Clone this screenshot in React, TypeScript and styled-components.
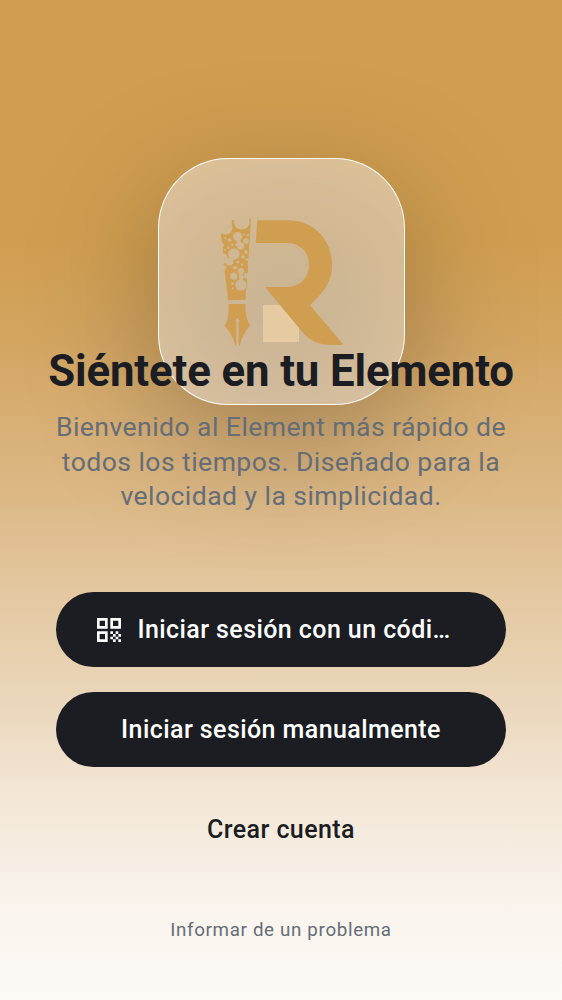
import React from "react";
import styled, { createGlobalStyle } from "styled-components";

const Global = createGlobalStyle`
  * { box-sizing: border-box; }
  body { margin: 0; font-family: Roboto, "Liberation Sans", sans-serif; }
`;

const Screen = styled.main`
  position: relative;
  isolation: isolate;
  overflow: hidden;
  height: 1000px;
  padding: 158px 56px 0;
  display: flex;
  flex-direction: column;
  align-items: center;
  background: linear-gradient(
    180deg,
    #d09e50 0px,
    #d09e50 240px,
    #d3a561 340px,
    #ddb987 500px,
    #e4c9a2 600px,
    #ebd6bb 700px,
    #f3e7d7 800px,
    #f9f3ec 900px,
    #fdfaf6 1000px
  );
`;

const LogoCard = styled.div`
  position: relative;
  flex: none;
  width: 247px;
  height: 247px;
  margin-bottom: -60px;
  border-radius: 70px;
  border: 1px solid rgba(255, 255, 255, 0.95);
  background: rgba(234, 220, 201, 0.6);

  &::before {
    content: "";
    position: absolute;
    z-index: -1;
    inset: 0;
    border-radius: 60px;
    transform: translateY(34px);
    background: rgba(0, 0, 0, 0.26);
    filter: blur(62px);
  }
`;

const Logo = styled.svg`
  position: absolute;
  left: 51px;
  top: 51px;
`;

const Title = styled.h1`
  position: relative;
  margin: 0;
  font-size: 43.75px;
  line-height: 53px;
  font-weight: 700;
  letter-spacing: -0.12px;
  white-space: nowrap;
  color: #1b1d22;
`;

const Message = styled.p`
  position: relative;
  width: 470px;
  margin: 12.3px 0 0;
  font-size: 26.56px;
  line-height: 34.5px;
  letter-spacing: 0.44px;
  text-align: center;
  color: #656d77;
`;

const Actions = styled.div`
  position: relative;
  display: flex;
  flex-direction: column;
  gap: 25px;
  width: 450px;
  margin-top: 78.4px;
`;

const Button = styled.button<{ $plain?: boolean; $withIcon?: boolean }>`
  display: flex;
  align-items: center;
  justify-content: ${(p) => (p.$withIcon ? "flex-start" : "center")};
  gap: 16.4px;
  height: 75px;
  padding: ${(p) => (p.$withIcon ? "0 41px" : "0")};
  border: 0;
  border-radius: 38px;
  font: 500 25px Roboto, "Liberation Sans", sans-serif;
  letter-spacing: 0.42px;
  background: ${(p) => (p.$plain ? "transparent" : "#1b1d22")};
  color: ${(p) => (p.$plain ? "#1b1d22" : "#fff")};
`;

const Report = styled.a`
  position: relative;
  margin-top: 51px;
  font-size: 18.75px;
  line-height: 25px;
  letter-spacing: 0.66px;
  color: #656d77;
`;

const QrIcon = () => (
  <svg width="24" height="24" viewBox="3 3 18 18" fill="currentColor">
    <path d="M3 11h8V3H3v8zm2-6h4v4H5V5zM3 21h8v-8H3v8zm2-6h4v4H5v-4zM13 3v8h8V3h-8zm6 6h-4V5h4v4zM19 19h2v2h-2zM13 13h2v2h-2zM15 15h2v2h-2zM13 17h2v2h-2zM15 19h2v2h-2zM17 17h2v2h-2zM17 13h2v2h-2zM19 15h2v2h-2z" />
  </svg>
);

/* Holes of the perforated pen barrel: x, y, radius */
const holes = [
  [241.7, 221.5, 8], [226, 228, 6.4], [237.6, 236.4, 4.5], [240.6, 246, 3.7],
  [246, 241, 2.7], [229.4, 240, 1.8], [225.3, 238, 1], [232.2, 244.7, 1.3],
  [236.2, 244.7, 1.2], [228.2, 247.6, 1.2], [243.8, 234.4, 1], [247.8, 235.2, 1],
  [221.8, 245, 2.2], [225, 249.8, 1], [233.8, 254, 5.8], [229.6, 261.8, 3.8],
  [222, 258.5, 5.6], [242.9, 257, 1.9], [246, 252, 1.7], [247.4, 259.5, 1.5],
  [237.8, 262, 1.5], [242, 264.5, 1.3], [235, 267.6, 1.9], [241, 271.2, 3.1],
  [233.7, 276.2, 3.6], [241.5, 277.5, 2.3], [246.8, 275.8, 3], [240.9, 285, 5.6],
  [232.6, 283.6, 1.4], [233, 288.5, 1],
];

const AppLogo = () => (
  <Logo width="145" height="145" viewBox="210 210 145 145" fill="#d09e50">
    <mask id="perforation" maskUnits="userSpaceOnUse" x="210" y="210" width="60" height="100">
      <rect x="210" y="210" width="60" height="100" fill="#fff" />
      {holes.map(([cx, cy, r]) => (
        <circle key={`${cx}-${cy}`} cx={cx} cy={cy} r={r} fill="#000" />
      ))}
      <path d="M238 238L240 246M241 271L241 282M233 256L230 262" stroke="#000" strokeWidth="3.6" />
    </mask>
    <path d="M263 305H299V342H263Z" fill="#e6caa1" />
    <path d="M257.2 220.3H288C314 220.3 332 240 332 265C332 286 319 296 310 305.3L343.5 344.8C327 345.7 314 344.7 304 334L265 287H287C300 287 309 277 309 265C309 252 300 243 287 243H255.8Z" />
    <path
      mask="url(#perforation)"
      d="M231.8 220H234L249 219H251L250.3 231L250 238L248.9 245L249 253L247.8 261L248 270L247 280L247.3 285L246 289.5L245.5 299.7L228.2 300.3L224.6 271L227 267L223.5 265L223 250L220.8 234L226 233L232 229Z"
    />
    <path d="M228.6 304H245.6C245.4 312 246 318.5 250.3 325.3Q241.8 335 239.6 345.7H238.6V321.4A1.7 1.7 0 1 0 236.3 321.4V345.7H235.4Q233 335 224.8 326C228 320 229 313 228.6 304Z" />
  </Logo>
);

export default function App() {
  return (
    <>
      <Global />
      <Screen>
        <LogoCard>
          <AppLogo />
        </LogoCard>
        <Title>Siéntete en tu Elemento</Title>
        <Message>
          Bienvenido al Element más rápido de
          <br />
          todos los tiempos. Diseñado para la
          <br />
          velocidad y la simplicidad.
        </Message>
        <Actions>
          <Button $withIcon>
            <QrIcon />
            <span>Iniciar sesión con un códi…</span>
          </Button>
          <Button>Iniciar sesión manualmente</Button>
          <Button $plain>Crear cuenta</Button>
        </Actions>
        <Report>Informar de un problema</Report>
      </Screen>
    </>
  );
}
